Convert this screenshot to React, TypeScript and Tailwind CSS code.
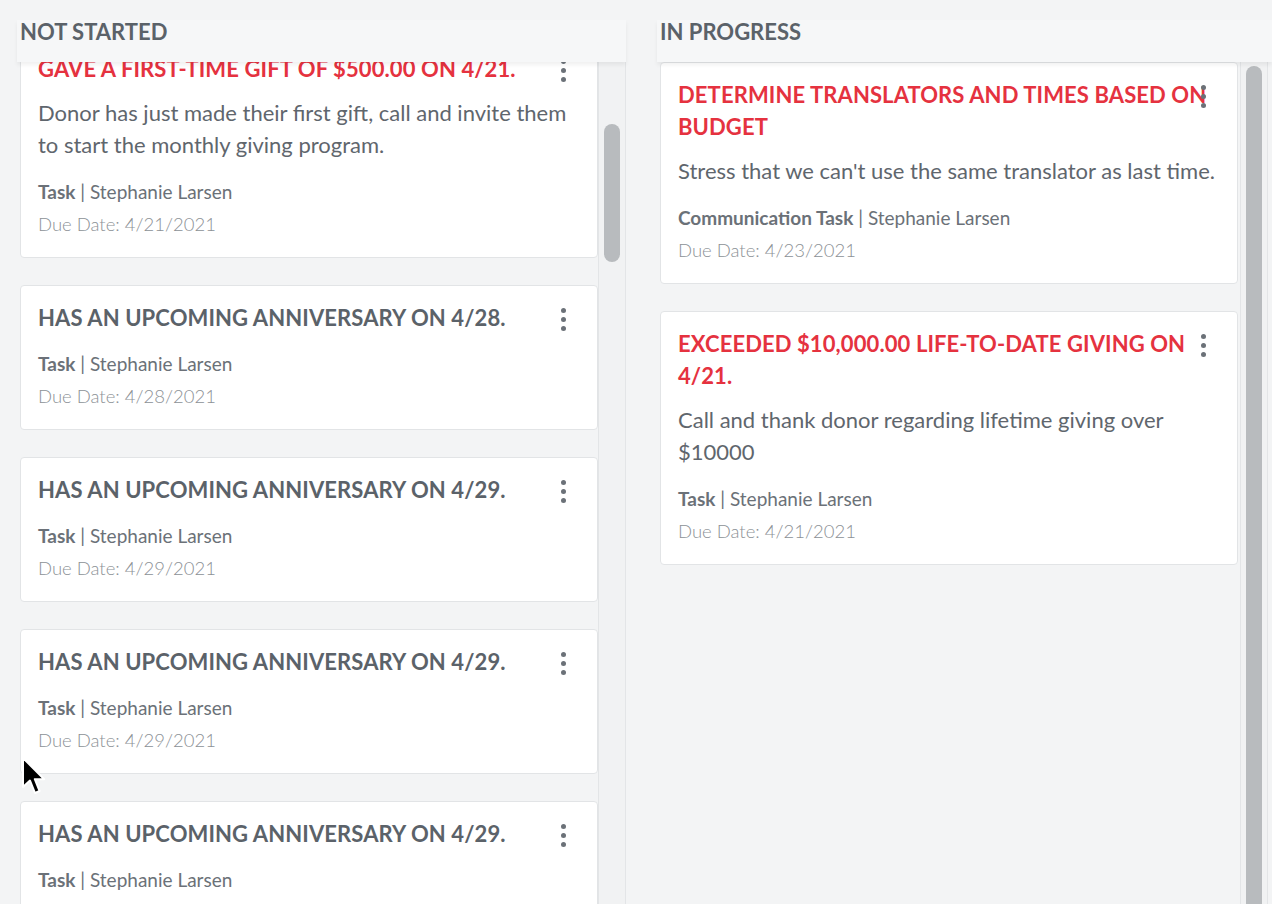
import React from 'react';

type Task = {
  title: string;
  urgent?: boolean;
  note?: string;
  kind: string;
  owner: string;
  due: string;
};

const notStarted: Task[] = [
  {
    title: 'Gave a first-time gift of $500.00 on 4/21.',
    urgent: true,
    note: 'Donor has just made their first gift, call and invite them to start the monthly giving program.',
    kind: 'Task',
    owner: 'Stephanie Larsen',
    due: '4/21/2021',
  },
  { title: 'Has an upcoming anniversary on 4/28.', kind: 'Task', owner: 'Stephanie Larsen', due: '4/28/2021' },
  { title: 'Has an upcoming anniversary on 4/29.', kind: 'Task', owner: 'Stephanie Larsen', due: '4/29/2021' },
  { title: 'Has an upcoming anniversary on 4/29.', kind: 'Task', owner: 'Stephanie Larsen', due: '4/29/2021' },
  { title: 'Has an upcoming anniversary on 4/29.', kind: 'Task', owner: 'Stephanie Larsen', due: '4/29/2021' },
];

const inProgress: Task[] = [
  {
    title: 'Determine translators and times based on budget',
    urgent: true,
    note: "Stress that we can't use the same translator as last time.",
    kind: 'Communication Task',
    owner: 'Stephanie Larsen',
    due: '4/23/2021',
  },
  {
    title: 'Exceeded $10,000.00 life-to-date giving on 4/21.',
    urgent: true,
    note: 'Call and thank donor regarding lifetime giving over $10000',
    kind: 'Task',
    owner: 'Stephanie Larsen',
    due: '4/21/2021',
  },
];

function Kebab() {
  return (
    <button className="absolute top-[22px] right-[31px] flex flex-col gap-[4px] p-0">
      <span className="w-[5px] h-[5px] rounded-full bg-[#6b7178]" />
      <span className="w-[5px] h-[5px] rounded-full bg-[#6b7178]" />
      <span className="w-[5px] h-[5px] rounded-full bg-[#6b7178]" />
    </button>
  );
}

function TaskCard({ task }: { task: Task }) {
  return (
    <div className="relative bg-white border border-[#e2e4e6] rounded-[4px] pl-[17px] pr-[16px] pt-[16px] pb-[17px]">
      <h3
        className={`uppercase font-bold text-[22px] leading-[32px] tracking-[0.1px] ${
          task.urgent ? 'text-[#e5323f]' : 'text-[#5b6269]'
        }`}
      >
        {task.title}
      </h3>
      <Kebab />
      {task.note && <p className="mt-[12px] text-[22px] leading-[32px] text-[#5f666d]">{task.note}</p>}
      <p className={`${task.note ? 'mt-[15px]' : 'mt-[14px]'} text-[19px] leading-[32px] text-[#6b7178]`}>
        <span className="font-bold">{task.kind}</span> | {task.owner}
      </p>
      <p className="text-[18.5px] leading-[32px] font-light text-[#8c9196]">Due Date: {task.due}</p>
    </div>
  );
}

function ColumnHeader({ label }: { label: string }) {
  return (
    <div className="h-[62px] pt-[20px] relative z-10">
      <div className="h-[42px] -ml-[3px] pl-[3px] bg-[#f6f7f8] shadow-[0_3px_4px_rgba(0,0,0,0.06)]">
        <h2 className="uppercase font-bold text-[22px] leading-[24px] text-[#5b6269]">{label}</h2>
      </div>
    </div>
  );
}

function ScrollTrack({ top, height }: { top: number; height: number }) {
  return (
    <div className="w-[28px] h-full border-x border-[#e3e5e7] bg-[#f1f2f3] flex justify-center">
      <div className="w-[16px] rounded-full bg-[#b8bbbe]" style={{ marginTop: top, height }} />
    </div>
  );
}

export default function App() {
  return (
    <div
      className="relative w-[1272px] h-[904px] overflow-hidden bg-[#f3f4f5] flex"
      style={{ fontFamily: 'Lato, "Open Sans", sans-serif' }}
    >
      <section className="w-[626px] pl-[20px] flex flex-col">
        <ColumnHeader label="Not Started" />
        <div className="flex h-[842px]">
          <div className="w-[578px] overflow-hidden">
            <div className="-mt-[26px] flex flex-col gap-[27px]">
              {notStarted.map((t, i) => (
                <TaskCard key={i} task={t} />
              ))}
            </div>
          </div>
          <ScrollTrack top={62} height={138} />
        </div>
      </section>

      <section className="w-[646px] pl-[34px] flex flex-col">
        <ColumnHeader label="In Progress" />
        <div className="flex h-[842px] gap-[2px]">
          <div className="w-[578px] overflow-hidden">
            <div className="flex flex-col gap-[27px]">
              {inProgress.map((t, i) => (
                <TaskCard key={i} task={t} />
              ))}
            </div>
          </div>
          <ScrollTrack top={4} height={900} />
        </div>
      </section>

      {/* mouse pointer */}
      <svg className="absolute left-[21px] top-[756px]" width="26" height="40" viewBox="0 0 13 20">
        <path
          d="M1 1 L1 15.5 L4.5 12.3 L7 18.5 L9.3 17.5 L6.9 11.6 L11.6 11.6 Z"
          fill="#000"
          stroke="#fff"
          strokeWidth="1"
          strokeLinejoin="round"
        />
      </svg>
    </div>
  );
}
